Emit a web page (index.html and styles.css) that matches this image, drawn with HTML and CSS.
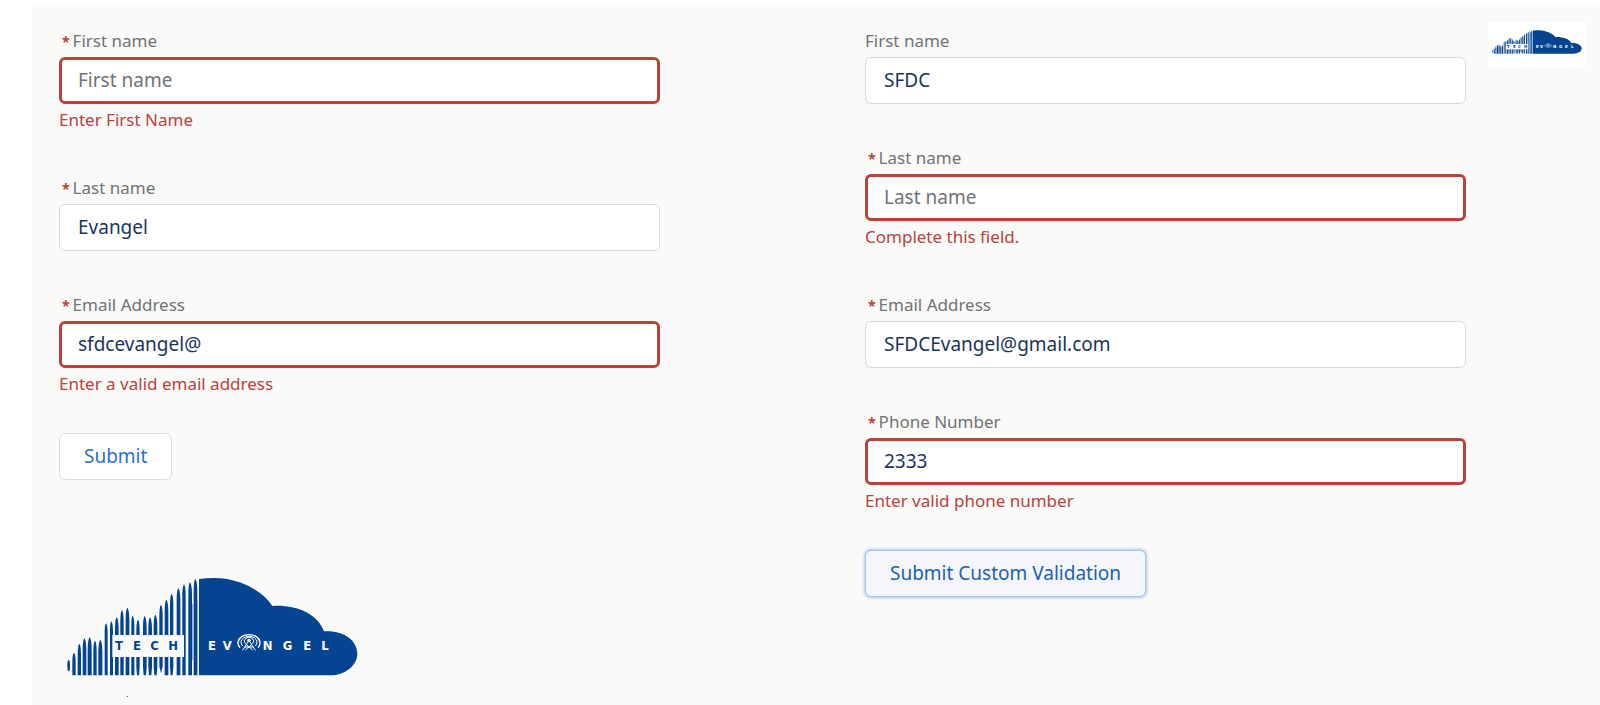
FILE: index.html
```html
<!DOCTYPE html>
<html lang="en">
<head>
    <meta charset="UTF-8">
    <title>Form Validation</title>
    <link rel="stylesheet" href="styles.css">
</head>
<body>
<svg class="defs" aria-hidden="true">
    <symbol id="cloud" viewBox="50 50 875 298" preserveAspectRatio="none">
        <g fill="#054491">
            <ellipse cx="56" cy="316" rx="4" ry="17"/>
            <path d="M72 278c4 4 5 14 5 28V345h-10V306c0-14 1-24 5-28z"/>
            <path d="M88 250c4 4 5 20 5 40V345h-10V290c0-20 1-36 5-40z"/>
            <path d="M103 234c4 4 6 20 6 40V345h-11V274c0-20 1-36 5-40z"/>
            <path d="M119 231c4 4 6 20 6 40V345h-12V271c0-20 2-36 6-40z"/>
            <path d="M135 241c4 4 5 20 5 40V345h-10V281c0-20 1-36 5-40z"/>
            <path d="M151 238c4 4 6 20 6 40V345h-12V278c0-20 2-36 6-40z"/>
            <path d="M168 189c4 4 5 20 5 40V345h-9V229c0-20 0-36 4-40z"/>
            <path d="M184 183c4 4 5 20 5 40V345h-9V223c0-20 0-36 4-40z"/>
            <path d="M200 171c4 4 6 20 6 40V345h-11V211c0-20 1-36 5-40z"/>
            <path d="M216 150c4 4 5 20 5 40V345h-10V190c0-20 1-36 5-40z"/>
            <path d="M232 142c4 4 6 20 6 40V345h-11V182c0-20 1-36 5-40z"/>
            <path d="M248 166c4 4 5 20 5 40V345h-9V206c0-20 0-36 4-40z"/>
            <path d="M264 178c4 4 5 20 5 40V320l-2 25h-6l-2-25V218c0-20 1-36 5-40z"/>
            <path d="M284 167c4 4 6 20 6 40V320l-2 25h-7l-2-25V207c0-20 1-36 5-40z"/>
            <path d="M300 171c4 4 6 20 6 40V320l-2 25h-7l-2-25V211c0-20 1-36 5-40z"/>
            <path d="M316 163c4 4 6 20 6 40V320l-2 25h-7l-2-25V203c0-20 1-36 5-40z"/>
            <path d="M333 133c4 4 5 20 5 40V318l-5 21-5-21V173c0-20 1-36 5-40z"/>
            <path d="M349 118c4 4 6 20 6 40V345h-11V158c0-20 1-36 5-40z"/>
            <path d="M365 100c4 4 5 20 5 40V320l-2 25h-6l-2-25V140c0-20 1-36 5-40z"/>
            <path d="M385 84c4 4 6 20 6 40V345h-11V124c0-20 1-36 5-40z"/>
            <path d="M402 72c4 4 5 20 5 40V345h-10V112c0-20 1-36 5-40z"/>
            <path d="M420 66c4 4 6 20 6 40V345h-11V106c0-20 1-36 5-40z"/>
            <path d="M436 56c4 4 6 20 6 40V345h-11V96c0-20 1-36 5-40z"/>
            <path d="M447 56Q480 52 512 54C580 60 640 95 667 137C740 133 802 160 822 213C880 209 922 240 922 280C922 315 885 345 840 345H447z"/>
        </g>
        <path d="M428 130V300M443 120V340" stroke="#8ba8cc" stroke-width="3"/>
        <rect x="187" y="224" width="215" height="66" fill="currentColor"/>
        <g fill="none" stroke="#fff" stroke-width="4">
            <path d="M570 262a33 25 0 1 1 54 0"/>
            <path d="M578 257a24 18 0 1 1 38 0" stroke-width="3"/>
            <path d="M586 250a14 12 0 1 1 22 0" stroke-width="3"/>
            <path d="M578 270l19-30 19 30M584 260h26M588 252l20 17M606 252l-20 17" stroke-width="3"/>
        </g>
        <circle cx="597" cy="240" r="5" fill="#fff"/>
    </symbol>
</svg>
<div class="panel">
    <form class="form form-left" novalidate>
        <div class="field error">
            <label for="first1"><abbr>*</abbr>First name</label>
            <input type="text" id="first1" placeholder="First name">
            <p class="help">Enter First Name</p>
        </div>
        <div class="field">
            <label for="last1"><abbr>*</abbr>Last name</label>
            <input type="text" id="last1" value="Evangel">
        </div>
        <div class="field error">
            <label for="email1"><abbr>*</abbr>Email Address</label>
            <input type="email" id="email1" value="sfdcevangel@">
            <p class="help">Enter a valid email address</p>
        </div>
        <button type="button" class="btn">Submit</button>
        <svg class="logo" viewBox="0 0 900 369" role="img" aria-label="Tech Evangel">
            <use href="#cloud" x="23" y="0" width="875" height="298"/>
            <text class="tech" x="168 222 274 328" y="219">TECH</text>
            <text class="evangel" x="447 491" y="218">EV</text>
            <text class="evangel" x="611 671 733 787" y="218">NGEL</text>
            <circle cx="205" cy="358" r="2" fill="#054491"/>
        </svg>
    </form>
    <form class="form" novalidate>
        <div class="field">
            <label for="first2">First name</label>
            <input type="text" id="first2" value="SFDC">
        </div>
        <div class="field error">
            <label for="last2"><abbr>*</abbr>Last name</label>
            <input type="text" id="last2" placeholder="Last name">
            <p class="help">Complete this field.</p>
        </div>
        <div class="field">
            <label for="email2"><abbr>*</abbr>Email Address</label>
            <input type="email" id="email2" value="SFDCEvangel@gmail.com">
        </div>
        <div class="field error">
            <label for="phone2"><abbr>*</abbr>Phone Number</label>
            <input type="tel" id="phone2" value="2333">
            <p class="help">Enter valid phone number</p>
        </div>
        <button type="button" class="btn active">Submit Custom Validation</button>
    </form>
    <svg class="logo-small" viewBox="0 0 97 45" role="img" aria-label="Tech Evangel">
        <use href="#cloud" x="4" y="8" width="90" height="24"/>
        <text class="tech" x="19 25 30 36" y="26">TECH</text>
        <text class="evangel" x="48 52" y="26">EV</text>
        <text class="evangel" x="65 71 77 83" y="26">NGEL</text>
    </svg>
</div>
</body>
</html>
```

FILE: styles.css
```css
*{
    margin: 0;
    padding: 0;
    box-sizing: border-box;
}
body{
    background: #fff;
    font-family: "Noto Sans", "Open Sans", sans-serif;
}
.defs{
    position: absolute;
    width: 0;
    height: 0;
}
.panel{
    display: flex;
    align-items: flex-start;
    min-height: calc(100vh - 4px);
    margin: 4px 0 0 32px;
    padding: 18px 15px 0 27px;
    background: #fafaf9;
}
.form{
    flex: 1;
    display: flex;
    flex-direction: column;
    align-items: flex-start;
    gap: 35px;
}
.form-left{
    margin-right: 205px;
}
.field{
    width: 100%;
}
.field label{
    display: block;
    padding: 7px 0 4px;
    font-size: 17px;
    line-height: 24px;
    color: #717375;
}
.field abbr{
    margin: 0 3px;
    font-size: 14px;
    font-weight: bold;
    line-height: 1;
    color: #ba423a;
}
.field input{
    display: block;
    width: 100%;
    height: 47px;
    padding: 0 18px 2px;
    border: 1px solid #d9dadd;
    border-radius: 6px;
    background: #fff;
    font-family: inherit;
    font-size: 19px;
    color: #1b345e;
}
.field input::placeholder{
    color: #717375;
}
.field.error input{
    padding: 0 16px 2px;
    border: 3px solid #ba423a;
}
.help{
    padding: 3px 0 1px;
    font-size: 17px;
    line-height: 26px;
    color: #ba423a;
}
.btn{
    height: 47px;
    padding: 0 24px 2px;
    border: 1px solid #d8dde8;
    border-radius: 6px;
    background: #fff;
    font-family: inherit;
    font-size: 19px;
    color: #2a6fcf;
}
.btn.active{
    border-color: #a9c4e6;
    background: #f4f6fb;
    box-shadow: 0 0 3px 1px #a9c6ea;
    color: #2160b2;
}
.logo{
    width: 300px;
    margin-top: 62px;
    color: #fafaf9;
}
.logo-small{
    width: 97px;
    height: 45px;
    margin-left: 22px;
    background: #fff;
    color: #fff;
}
.tech,
.evangel{
    font-family: "DejaVu Sans", sans-serif;
    font-weight: bold;
    font-size: 35px;
}
.tech{
    fill: #054491;
}
.evangel{
    fill: #fff;
}
.logo-small text{
    font-size: 4px;
}
```
